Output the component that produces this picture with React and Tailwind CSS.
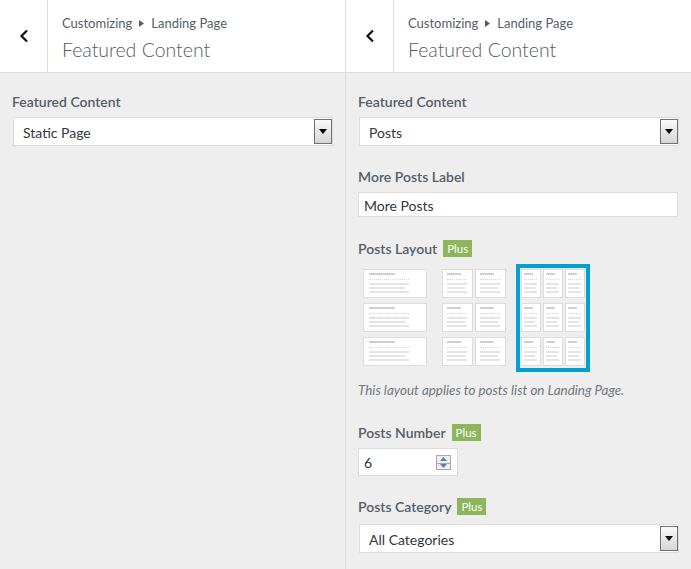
import React from "react";

const FONT = "font-['Lato','Open_Sans',sans-serif]";

function Header() {
  return (
    <div className="flex h-[73px] bg-white border-b border-[#dddddd]">
      <div className="w-[48px] shrink-0 border-r border-[#dddddd] flex items-center justify-center">
        <svg width="10" height="14" viewBox="0 0 10 14">
          <path d="M8 1.5 L2.5 7 L8 12.5" fill="none" stroke="#111" strokeWidth="2.2" strokeLinecap="butt" />
        </svg>
      </div>
      <div className="pl-[14px] pt-[13px] text-[#555d66]">
        <div className="text-[13px] leading-[20px] flex items-center">
          <span>Customizing</span>
          <svg className="mx-[7px]" width="5" height="7" viewBox="0 0 5 7"><path d="M0 0 L5 3.5 L0 7 Z" fill="#555d66" /></svg>
          <span>Landing Page</span>
        </div>
        <div className="text-[19.5px] leading-[28px] font-light mt-[3px]">Featured Content</div>
      </div>
    </div>
  );
}

function Select({ value }) {
  return (
    <div className="ml-[1px] w-[320px] h-[29px] bg-white border border-[#dddddd] flex items-stretch">
      <div className="flex-1 pl-[9px] pt-[1px] text-[14px] text-[#32373c] flex items-center">{value}</div>
      <div className="w-[18px] my-[1px] border border-[#707070] bg-gradient-to-b from-[#fafafa] to-[#d6d6d6] flex items-center justify-center">
        <svg width="8" height="5" viewBox="0 0 8 5"><path d="M0 0 H8 L4 5 Z" fill="#000" /></svg>
      </div>
    </div>
  );
}

function Label({ children, badge, className = "" }) {
  return (
    <div className={"flex items-center h-[20px] text-[14px] font-semibold text-[#555d66] " + className}>
      <span>{children}</span>
      {badge && (
        <span className="ml-[6px] h-[17px] px-[4px] bg-[#8db55c] text-white text-[11.5px] font-normal leading-[17px]">Plus</span>
      )}
    </div>
  );
}

function Card({ w, pl, tw, lw }) {
  return (
    <div className="h-[29px] bg-white border border-[#dddddd] flex flex-col pt-[3px]" style={{ width: w, paddingLeft: pl }}>
      <div className="h-[2px] bg-[#cfcfcf]" style={{ width: tw }} />
      <div className="mt-[4px] border-t border-dotted border-[#d4d4d4]" style={{ width: lw[0] }} />
      <div className="mt-[3px] h-[2px] bg-[#e4e4e4]" style={{ width: lw[0] }} />
      <div className="mt-[2px] h-[2px] bg-[#e4e4e4]" style={{ width: lw[1] }} />
      <div className="mt-[2px] h-[2px] bg-[#e4e4e4]" style={{ width: lw[0] }} />
    </div>
  );
}

function LayoutOption({ cols, selected }) {
  const cfg =
    cols === 1
      ? { w: 65, pl: 5, tw: 26, lw: [40, 36] }
      : cols === 2
      ? { w: 31, pl: 4, tw: 14, lw: [20, 18] }
      : { w: 20, pl: 2, tw: 9, lw: [13, 11] };
  return (
    <div className={"w-[74px] h-[108px] border-[4px] p-[1px] flex flex-col gap-[5px] " + (selected ? "border-[#00a0d2]" : "border-transparent")}>
      {[0, 1, 2].map((r) => (
        <div key={r} className="flex gap-[2px]">
          {Array.from({ length: cols }).map((_, c) => (
            <Card key={c} {...cfg} />
          ))}
        </div>
      ))}
    </div>
  );
}

function NumberInput() {
  return (
    <div className="w-[100px] h-[28px] bg-white border border-[#dddddd] flex items-center pl-[5px] pr-[6px]">
      <span className="flex-1 text-[14px] text-[#32373c]">6</span>
      <div className="w-[15px] h-[15px] flex flex-col">
        <div className="h-[8px] border-l border-r border-t border-[#a9a9a9] bg-[#f0f0f0] flex items-center justify-center">
          <svg width="7" height="4" viewBox="0 0 7 4"><path d="M0 4 H7 L3.5 0 Z" fill="#5c79c6" /></svg>
        </div>
        <div className="h-[7px] border border-[#a9a9a9] bg-[#f0f0f0] flex items-center justify-center">
          <svg width="7" height="4" viewBox="0 0 7 4"><path d="M0 0 H7 L3.5 4 Z" fill="#5c79c6" /></svg>
        </div>
      </div>
    </div>
  );
}

export default function App() {
  return (
    <div className={"w-[691px] h-[569px] flex bg-[#eeeeee] overflow-hidden " + FONT}>
      <div className="w-[346px] shrink-0 border-r border-[#dddddd] flex flex-col">
        <Header />
        <div className="px-[12px] pt-[18px]">
          <Label>Featured Content</Label>
          <div className="mt-[6px]"><Select value="Static Page" /></div>
        </div>
      </div>
      <div className="flex-1 flex flex-col">
        <Header />
        <div className="px-[12px] pt-[18px]">
          <Label>Featured Content</Label>
          <div className="mt-[6px]"><Select value="Posts" /></div>
          <Label className="mt-[20px]">More Posts Label</Label>
          <div className="mt-[6px] w-[320px] h-[25px] bg-white border border-[#dddddd] pl-[5px] pt-[1px] flex items-center text-[14px] text-[#32373c]">More Posts</div>
          <Label badge className="mt-[21px]">Posts Layout</Label>
          <div className="mt-[6px] flex gap-[5px]">
            <LayoutOption cols={1} />
            <LayoutOption cols={2} />
            <LayoutOption cols={3} selected />
          </div>
          <div className="mt-[9px] text-[13.4px] italic text-[#72777c] leading-[18px]">This layout applies to posts list on Landing Page.</div>
          <Label badge className="mt-[23px]">Posts Number</Label>
          <div className="mt-[6px]"><NumberInput /></div>
          <Label badge className="mt-[20px]">Posts Category</Label>
          <div className="mt-[8px]"><Select value="All Categories" /></div>
        </div>
      </div>
    </div>
  );
}
